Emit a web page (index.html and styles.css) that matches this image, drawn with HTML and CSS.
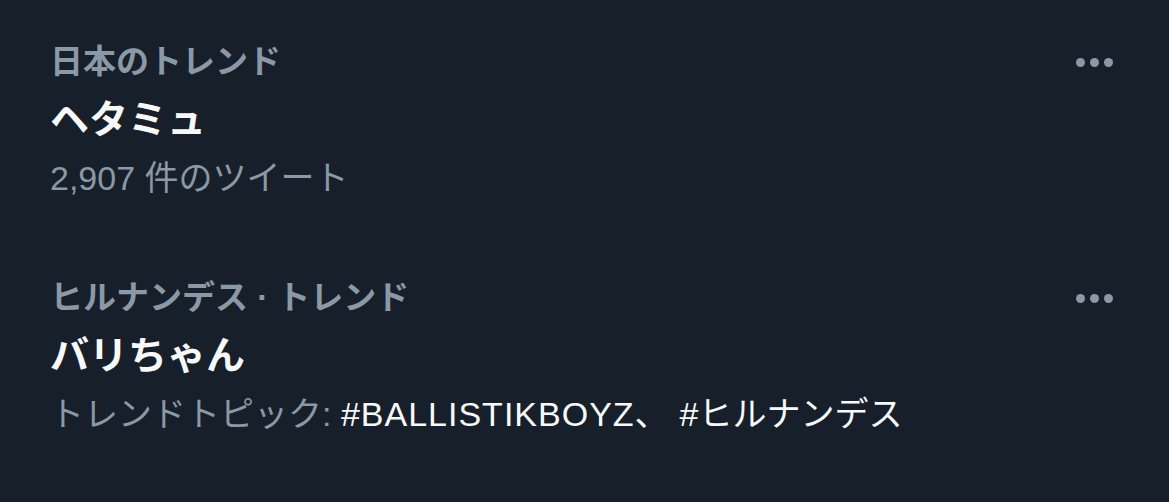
FILE: index.html
```html
<!DOCTYPE HTML>
<html>
<head>
	<title>トレンド</title>
	<link rel="stylesheet" href="styles.css">
</head>
<body>
	<div class="trends">
		<div class="trend">
			<div class="trend-text">
				<div class="context">日本のトレンド</div>
				<div class="name">ヘタミュ</div>
				<div class="meta">2,907 件のツイート</div>
			</div>
			<div class="more"><span></span><span></span><span></span></div>
		</div>
		<div class="trend">
			<div class="trend-text">
				<div class="context">ヒルナンデス · トレンド</div>
				<div class="name">バリちゃん</div>
				<div class="meta">トレンドトピック: <span class="tag latin">#BALLISTIKBOYZ</span><span class="tag">、</span><span class="tag next">#ヒルナンデス</span></div>
			</div>
			<div class="more"><span></span><span></span><span></span></div>
		</div>
	</div>
</body>
</html>
```

FILE: styles.css
```css
body {
	margin: 0;
	background-color: #17202a;
	font-family: "Liberation Sans", "Noto Sans CJK JP", sans-serif;
}

.trends {
	display: flex;
	flex-direction: column;
	gap: 62px;
	padding: 33px 56px 0 50px;
}

.trend {
	display: flex;
	justify-content: space-between;
	align-items: flex-start;
}

.context {
	color: #8b98a5;
	font-size: 33px;
	font-weight: 600;
	line-height: 58px;
}

.name {
	color: #f7f9f9;
	font-size: 39px;
	font-weight: 700;
	line-height: 58px;
}

.meta {
	color: #8b98a5;
	font-size: 34px;
	line-height: 58px;
}

.tag {
	color: #f7f9f9;
}

.latin {
	letter-spacing: 1px;
}

.next {
	margin-left: 11px;
}

.more {
	display: flex;
	gap: 5px;
	padding-top: 25px;
}

.more span {
	width: 9px;
	height: 9px;
	border-radius: 50%;
	background-color: #8b98a5;
}
```
